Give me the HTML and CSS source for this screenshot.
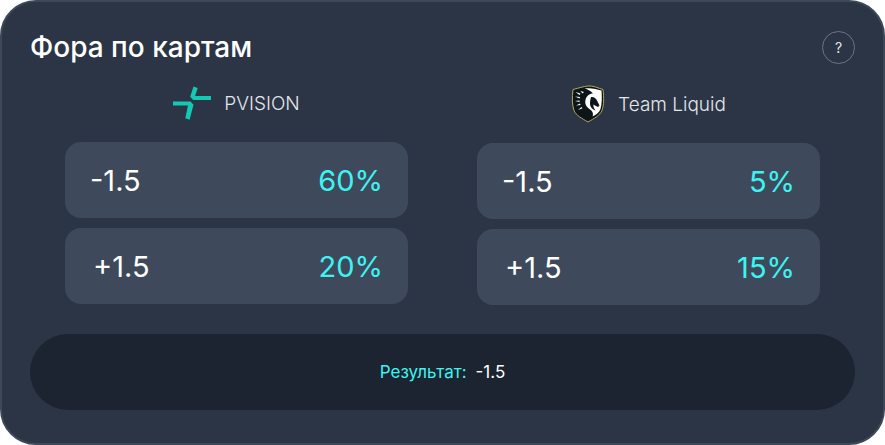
FILE: index.html
```html
<!DOCTYPE html>
<html lang="ru">
<head>
<meta charset="utf-8">
<title>Фора по картам</title>
<link rel="stylesheet" href="styles.css">
</head>
<body>
<main class="card">
  <header class="head">
    <h1 class="title">Фора по картам</h1>
    <button class="help" type="button">?</button>
  </header>
  <div class="teams">
    <section class="team">
      <div class="team-name">
        <svg class="logo-pv" width="38" height="36" viewBox="0 0 38 36"><path fill="#14c9b4" d="M20.5 1.5l4.2 1.4-2.6 8.2 16 0-.2 3.9-17.700 0-3-3.200z"/><path fill="#14c9b4" d="M0 16.500l17.500 0 3 3.200-3.900 15.100-4.300-1.500 2.700-12.900-15 0z"/></svg>
        <span>PVISION</span>
      </div>
      <div class="row"><span class="val">-1.5</span><span class="pct">60%</span></div>
      <div class="row"><span class="val plus">+1.5</span><span class="pct">20%</span></div>
    </section>
    <section class="team team-right">
      <div class="team-name">
        <svg class="logo-tl" width="34" height="38" viewBox="0 0 34 38">
          <path fill="#0e1519" stroke="#b5a75a" stroke-width="1" d="M2 4.500C8 3 12 1.500 17 1s10 2 15 3.500c1 9 1 15-1 21-2 5-8 8-14 11.500C11 33.500 5 30.500 3 25.500 1 19.500 1 13 2 4.500z"/>
          <path fill="#fff" d="M14 3.500c6-1 11 .5 16.500 2 .5 7 .5 13-1 18.500-1 3-4 5.500-8 7.500 1.500-3-.5-6-3-7.500-3-2-5-5-4-9 .8-4 4-6.500 7.500-6.500-2-2.500-5-4-8.500-5z"/>
          <path fill="#0e1519" d="M20 12c3-.5 5 1 6.500 4.500l2 4-1.500 1.500-3-1.500-1.500-1c-.5 2 .5 4 2 6-3-1-5.500-3.500-5.500-7 0-2.500.5-4.500 1-6.500z"/>
          <path fill="#fff" d="M4.500 7l5 1.500-1 1.500zM4 11.500l5 .5-.5 1.500zM4 16l4.500-.5 0 1.500zM5 20.500l4-2 .5 1.500zM7 25l3.500-3 1 1.200zM9.500 6l3.500 1-1.500 1.500z"/>
        </svg>
        <span>Team Liquid</span>
      </div>
      <div class="row"><span class="val">-1.5</span><span class="pct">5%</span></div>
      <div class="row"><span class="val plus">+1.5</span><span class="pct">15%</span></div>
    </section>
  </div>
  <footer class="result">
    <span class="result-label">Результат:</span>
    <span class="result-val">-1.5</span>
  </footer>
</main>
</body>
</html>
```
FILE: styles.css
```css
* { box-sizing: border-box; }
html, body { margin: 0; padding: 0; background: #fff; }
body { width: 885px; height: 445px; overflow: hidden; font-family: Inter, "Liberation Sans", sans-serif; }
.card {
  width: 885px;
  height: 445px;
  background: #2b3545;
  border: 2px solid #3d4859;
  border-radius: 36px;
  padding: 0 28px;
  display: flex;
  flex-direction: column;
}
.head {
  display: flex;
  justify-content: space-between;
  align-items: center;
  height: 63px;
  padding-top: 27px;
  flex: none;
}
.title {
  margin: 0;
  font-size: 28px;
  line-height: 34px;
  font-weight: 500;
  color: #fff;
}
.help {
  width: 33px;
  height: 33px;
  padding: 0;
  margin-top: 1px;
  border: 1px solid #6a7482;
  border-radius: 50%;
  background: none;
  color: #e4e7ea;
  font: 400 14px/1 Inter, sans-serif;
}
.teams {
  display: flex;
  justify-content: space-between;
  padding: 0 35px;
  margin-top: 19px;
}
.team { width: 343px; display: flex; flex-direction: column; gap: 10px; }
.team-right { padding-top: 1px; }
.team-name {
  height: 38px;
  margin-bottom: 10px;
  display: flex;
  align-items: center;
  justify-content: center;
  gap: 13px;
  color: #e3e6ea;
  font-size: 19px;
  font-weight: 300;
}
.row {
  height: 76px;
  background: #3e4a5b;
  border-radius: 16px;
  padding: 0 25px;
  display: flex;
  justify-content: space-between;
  align-items: center;
  font-size: 29px;
  font-weight: 400;
}
.val { color: #fff; }
.plus { padding-left: 3px; }
.pct { color: #3df4f2; }
.result {
  margin-top: 29px;
  height: 76px;
  border-radius: 38px;
  background: #1b2430;
  display: flex;
  justify-content: center;
  align-items: center;
  gap: 9px;
  font-size: 17px;
}
.result-label { color: #3df4f2; }
.result-val { color: #fff; }
```
